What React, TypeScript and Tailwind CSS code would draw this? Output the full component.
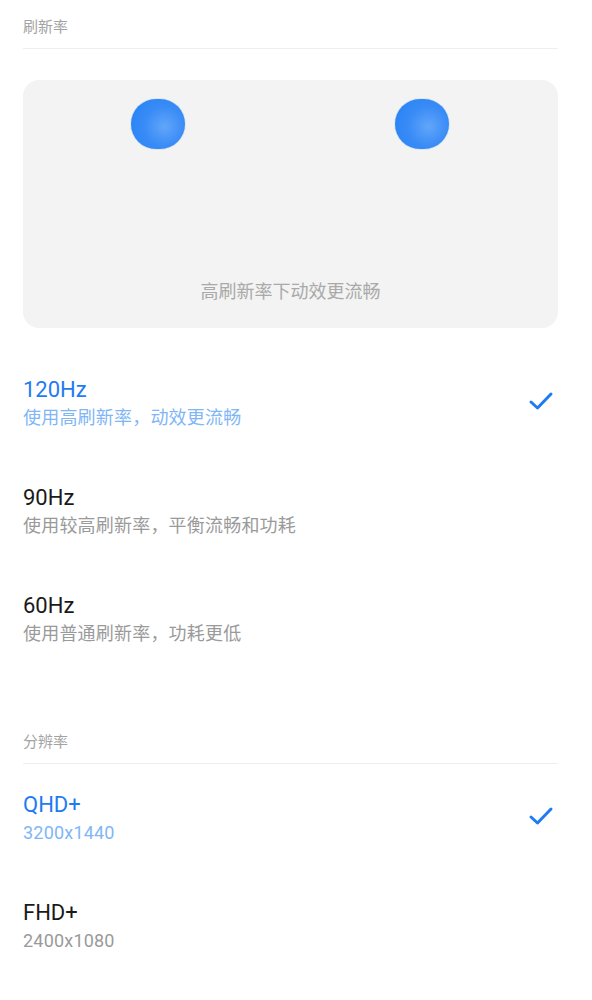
import { Fragment } from "react";

type Option = {
  title: string;
  desc: string;
  selected?: boolean;
};

const refreshOptions: Option[] = [
  { title: "120Hz", desc: "使用高刷新率，动效更流畅", selected: true },
  { title: "90Hz", desc: "使用较高刷新率，平衡流畅和功耗" },
  { title: "60Hz", desc: "使用普通刷新率，功耗更低" },
];

const resolutionOptions: Option[] = [
  { title: "QHD+", desc: "3200x1440", selected: true },
  { title: "FHD+", desc: "2400x1080" },
];

function SectionHeader({ label }: { label: string }) {
  return (
    <div className="border-b border-[#eeeeee] pt-[17px] pb-[11px] text-[15px] leading-[20px] text-[#a3a3a3]">
      {label}
    </div>
  );
}

function CheckIcon() {
  return (
    <svg width="26" height="22" viewBox="0 0 26 22" fill="none">
      <path
        d="M3 12 L9.5 18 L23 4"
        stroke="#1f7bf2"
        strokeWidth="3"
        strokeLinecap="round"
        strokeLinejoin="round"
      />
    </svg>
  );
}

function OptionRow({ option }: { option: Option }) {
  return (
    <div className="flex h-[108px] items-center justify-between">
      <div className="flex flex-col">
        <span
          className={
            option.selected
              ? "text-[22px] leading-[28px] text-[#1f7bf2]"
              : "text-[22px] leading-[28px] text-[#1a1a1a]"
          }
        >
          {option.title}
        </span>
        <span
          className={
            option.selected
              ? "text-[18px] leading-[28px] tracking-[0.2px] text-[#80b6f6]"
              : "text-[18px] leading-[28px] tracking-[0.2px] text-[#9a9a9a]"
          }
        >
          {option.desc}
        </span>
      </div>
      {option.selected ? (
        <div className="mr-[4px] mt-[-6px]">
          <CheckIcon />
        </div>
      ) : null}
    </div>
  );
}

function Ball() {
  return (
    <div className="h-[50px] w-[54px] rounded-full bg-[radial-gradient(circle_at_62%_55%,#62a6fa_0%,#3a8cf6_45%,#2280f5_100%)] shadow-[0_0_1px_#2280f5]" />
  );
}

export default function App() {
  return (
    <div
      className="min-h-[1000px] bg-white pl-[23px] pr-[34px]"
      style={{ fontFamily: 'Roboto, "Noto Sans CJK SC", sans-serif' }}
    >
      <SectionHeader label="刷新率" />

      <div className="mt-[31px] flex h-[248px] flex-col rounded-2xl bg-[#f3f3f3]">
        <div className="mt-[19px] flex justify-between pl-[108px] pr-[109px]">
          <Ball />
          <Ball />
        </div>
        <div className="mt-auto mb-[24px] text-center text-[18px] leading-[24px] text-[#a9a9a9]">
          高刷新率下动效更流畅
        </div>
      </div>

      <div className="mt-[22px]">
        {refreshOptions.map((o) => (
          <Fragment key={o.title}>
            <OptionRow option={o} />
          </Fragment>
        ))}
      </div>

      <div className="mt-[41px]">
        <SectionHeader label="分辨率" />
      </div>

      <div className="pt-[1px]">
        {resolutionOptions.map((o) => (
          <OptionRow key={o.title} option={o} />
        ))}
      </div>
    </div>
  );
}
